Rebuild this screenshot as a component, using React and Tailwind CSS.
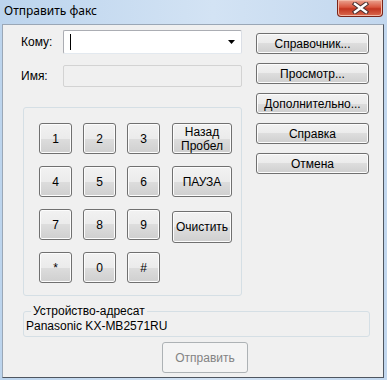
import React from 'react';

const btn =
  'flex items-center justify-center rounded-[3px] border border-[#707070] bg-[linear-gradient(#f2f2f2_0%,#ebebeb_50%,#dddddd_50%,#cfcfcf_100%)] shadow-[inset_0_0_0_1px_#fcfcfc] text-[12px] text-black leading-[14px]';

function Key({ children, className = '' }) {
  return <div className={`${btn} ${className}`}>{children}</div>;
}

export default function App() {
  const keys = [
    ['1', '2', '3'],
    ['4', '5', '6'],
    ['7', '8', '9'],
    ['*', '0', '#'],
  ];

  return (
    <div className="w-[387px] h-[380px] flex flex-col bg-[linear-gradient(90deg,#bcd4ed,#d3e3f4_55%,#c2d7ee)] font-['Liberation_Sans',Arial,sans-serif]">
      {/* Title bar */}
      <div className="h-[24px] flex items-start justify-between">
        <span className="mt-[3px] ml-[4px] text-[12px] leading-[16px] text-black font-['Noto_Sans',sans-serif]">
          Отправить факс
        </span>
        <div className="mr-[4px] w-[46px] h-[17px] rounded-b-[4px] border border-t-0 border-[#7a2418] bg-[linear-gradient(#eba391_0%,#d9563f_45%,#c23520_55%,#d96a4f_100%)] shadow-[inset_0_0_0_1px_#f3b8a6] flex items-center justify-center">
          <svg width="17" height="12" viewBox="0 0 17 12">
            <path d="M3 2 L14 10 M14 2 L3 10" stroke="#4a3030" strokeWidth="4.5" strokeLinecap="square" />
            <path d="M3 2 L14 10 M14 2 L3 10" stroke="#ffffff" strokeWidth="2.4" strokeLinecap="square" />
          </svg>
        </div>
      </div>

      {/* Client area */}
      <div className="ml-[2px] w-[382px] h-[354px] border border-[#9aa7b6] border-r-[#4f5660] border-b-[#4f5660] bg-[#f0f0f0]">
        <div className="flex">
          {/* Left column */}
          <div className="w-[239px]">
            <div className="mt-[5px] h-[24px] flex items-center">
              <span className="w-[60px] pl-[18px] text-[12px]">Кому:</span>
              <div className="w-[179px] h-[24px] rounded-[2px] border border-[#abadb3] border-b-[#e3e9ef] border-r-[#dbdfe6] bg-white flex items-center justify-between px-[6px]">
                <div className="w-[1px] h-[16px] bg-black" />
                <svg width="7" height="4" viewBox="0 0 7 4">
                  <path d="M0 0 H7 L3.5 4 Z" fill="#000" />
                </svg>
              </div>
            </div>
            <div className="mt-[11px] h-[22px] flex items-center">
              <span className="w-[60px] pl-[18px] text-[12px]">Имя:</span>
              <div className="w-[179px] h-[22px] rounded-[2px] border border-[#d3d3d3] bg-[#f0f0f0]" />
            </div>

            {/* Keypad group */}
            <div className="mt-[20px] ml-[20px] w-[219px] h-[189px] rounded-[3px] border border-[#d5dfe5] pt-[15px] pl-[15px]">
              <div className="flex gap-[12px]">
                <div className="grid grid-cols-[33px_33px_33px] auto-rows-[31px] gap-x-[11px] gap-y-[12px]">
                  {keys.flat().map((k) => (
                    <Key key={k}>{k}</Key>
                  ))}
                </div>
                <div className="flex flex-col w-[60px]">
                  <Key className="h-[31px] flex-col">
                    <span>Назад</span>
                    <span>Пробел</span>
                  </Key>
                  <Key className="h-[31px] mt-[12px]">ПАУЗА</Key>
                  <Key className="h-[32px] mt-[14px]">Очистить</Key>
                </div>
              </div>
            </div>
          </div>

          {/* Right column */}
          <div className="ml-[14px] pt-[8px] flex flex-col gap-[9px]">
            {['Справочник...', 'Просмотр...', 'Дополнительно...', 'Справка', 'Отмена'].map((t) => (
              <div key={t} className={`${btn} w-[113px] h-[21px]`}>
                {t}
              </div>
            ))}
          </div>
        </div>

        {/* Device group */}
        <div className="relative mt-[15px] ml-[20px] w-[347px] h-[26px] rounded-[3px] border border-[#d5dfe5] flex items-center pl-[2px] pt-[3px]">
          <span className="absolute -top-[9px] left-[7px] px-[2px] bg-[#f0f0f0] text-[12px] leading-[16px]">
            Устройство-адресат
          </span>
          <span className="text-[12px]">Panasonic KX-MB2571RU</span>
        </div>

        {/* Send button */}
        <div className="mt-[5px] ml-[159px] w-[86px] h-[31px] rounded-[3px] border border-[#adb2b5] bg-[#f4f4f4] flex items-center justify-center text-[12px] text-[#838383]">
          Отправить
        </div>
      </div>
    </div>
  );
}
